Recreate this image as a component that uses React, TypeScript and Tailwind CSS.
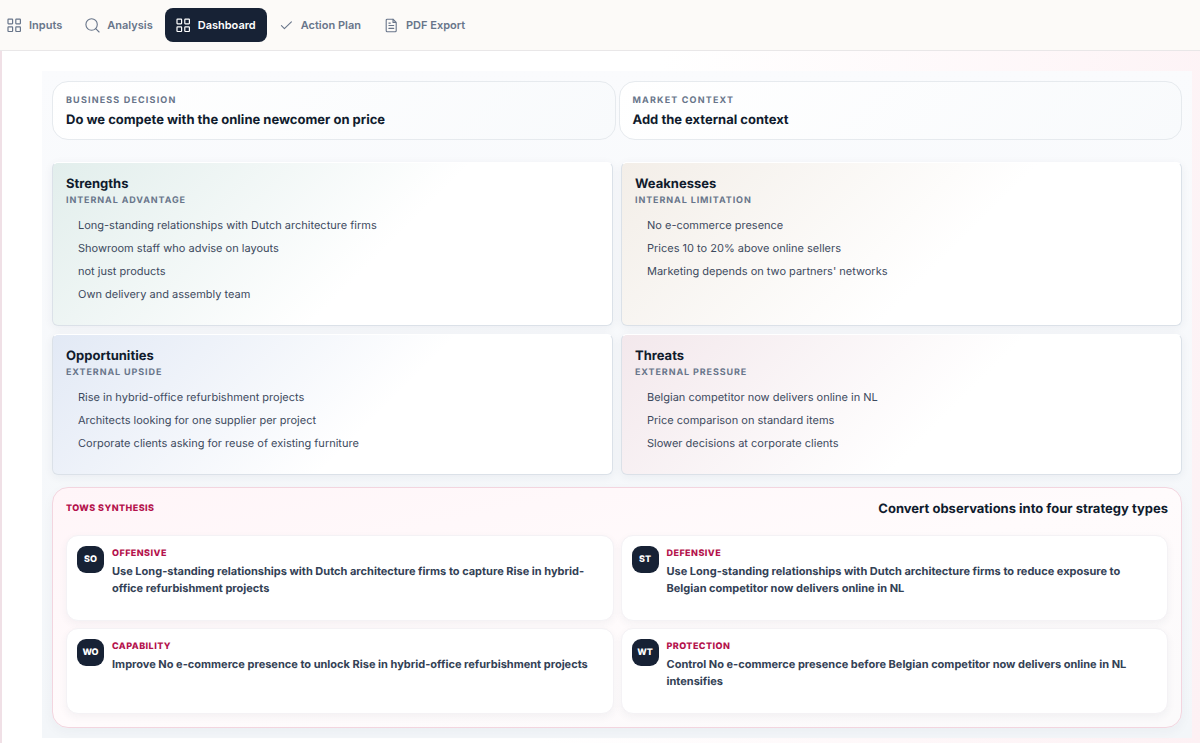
import type { ReactNode } from "react";

const sharedIcon = "size-[15px] shrink-0";

function GridIcon() {
  return (
    <svg className={sharedIcon} viewBox="0 0 15 15" fill="none" stroke="currentColor" strokeWidth="1.2" aria-hidden="true">
      <rect x="1" y="1.2" width="4.6" height="4.6" rx="0.5" />
      <rect x="8.8" y="1.2" width="4.6" height="4.6" rx="0.5" />
      <rect x="1" y="8.9" width="4.6" height="4.6" rx="0.5" />
      <rect x="8.8" y="8.9" width="4.6" height="4.6" rx="0.5" />
    </svg>
  );
}

function SearchIcon() {
  return (
    <svg className={sharedIcon} viewBox="0 0 15 15" fill="none" stroke="currentColor" strokeWidth="1.1" strokeLinecap="round" aria-hidden="true">
      <circle cx="6.6" cy="6.5" r="5.7" />
      <path d="M10.7 10.7 14.1 14" />
    </svg>
  );
}

function CheckIcon() {
  return (
    <svg className={sharedIcon} viewBox="0 0 15 15" fill="none" stroke="currentColor" strokeWidth="1.1" strokeLinecap="round" strokeLinejoin="round" aria-hidden="true">
      <path d="m2.4 7.6 3 3 7-6.8" />
    </svg>
  );
}

function FileIcon() {
  return (
    <svg className={sharedIcon} viewBox="0 0 15 15" fill="none" stroke="currentColor" strokeWidth="1.1" strokeLinecap="round" strokeLinejoin="round" aria-hidden="true">
      <path d="M9 1.2H3.2a1 1 0 0 0-1 1v10.6a1 1 0 0 0 1 1h8a1 1 0 0 0 1-1V4.4L9 1.2v3.2h3.2" />
      <path d="M4.9 7.5h4.8M4.9 10.4h4.8M4.9 5.1h1.4" />
    </svg>
  );
}

const tabs: { label: string; icon: ReactNode; active?: boolean }[] = [
  { label: "Inputs", icon: <GridIcon /> },
  { label: "Analysis", icon: <SearchIcon /> },
  { label: "Dashboard", icon: <GridIcon />, active: true },
  { label: "Action Plan", icon: <CheckIcon /> },
  { label: "PDF Export", icon: <FileIcon /> },
];

const context = [
  { label: "Business decision", value: "Do we compete with the online newcomer on price" },
  { label: "Market context", value: "Add the external context" },
];

const quadrants = [
  {
    title: "Strengths",
    note: "Internal advantage",
    tint: "bg-[linear-gradient(135deg,#e2eeec,#ffffff_58%)]",
    items: [
      "Long-standing relationships with Dutch architecture firms",
      "Showroom staff who advise on layouts",
      "not just products",
      "Own delivery and assembly team",
    ],
  },
  {
    title: "Weaknesses",
    note: "Internal limitation",
    tint: "bg-[linear-gradient(135deg,#f3eee8,#ffffff_58%)]",
    items: [
      "No e-commerce presence",
      "Prices 10 to 20% above online sellers",
      "Marketing depends on two partners' networks",
    ],
  },
  {
    title: "Opportunities",
    note: "External upside",
    tint: "bg-[linear-gradient(135deg,#e2e9f5,#ffffff_58%)]",
    items: [
      "Rise in hybrid-office refurbishment projects",
      "Architects looking for one supplier per project",
      "Corporate clients asking for reuse of existing furniture",
    ],
  },
  {
    title: "Threats",
    note: "External pressure",
    tint: "bg-[linear-gradient(135deg,#f3e8ec,#ffffff_58%)]",
    items: [
      "Belgian competitor now delivers online in NL",
      "Price comparison on standard items",
      "Slower decisions at corporate clients",
    ],
  },
];

const strategies = [
  { code: "SO", type: "Offensive", text: "Use Long-standing relationships with Dutch architecture firms to capture Rise in hybrid-office refurbishment projects" },
  { code: "ST", type: "Defensive", text: "Use Long-standing relationships with Dutch architecture firms to reduce exposure to Belgian competitor now delivers online in NL" },
  { code: "WO", type: "Capability", text: "Improve No e-commerce presence to unlock Rise in hybrid-office refurbishment projects" },
  { code: "WT", type: "Protection", text: "Control No e-commerce presence before Belgian competitor now delivers online in NL intensifies" },
];

export default function App() {
  return (
    <div className="flex min-h-screen flex-col bg-[#fcfaf8] font-['Inter',sans-serif] text-[#101b2d] [text-rendering:geometricPrecision]">
      <header className="overflow-hidden border-b border-[#e9e7e8] py-2">
        <nav className="-ml-1 flex gap-px" aria-label="Sections">
          {tabs.map((tab) => (
            <button
              key={tab.label}
              type="button"
              aria-current={tab.active ? "page" : undefined}
              className={`flex h-[34px] items-center gap-[7px] rounded-lg px-[11px] text-[11px] font-semibold ${
                tab.active ? "bg-[#172235] text-white" : "text-[#68758a]"
              }`}
            >
              {tab.icon}
              {tab.label}
            </button>
          ))}
        </nav>
      </header>

      <main className="grow border-l-2 border-[#f0e0e6] bg-[linear-gradient(100deg,#ffffff_50%,#fdf1f4)] pt-5 pr-2 pb-1 pl-10">
        <div className="bg-linear-to-b from-[#fafbfd] to-[#f3f6f9] p-[10px]">
          <section className="grid grid-cols-2 gap-[3px]">
            {context.map((entry) => (
              <div key={entry.label} className="rounded-2xl border border-[#e6eaee] bg-[linear-gradient(135deg,#ffffff,#f8fafc)] px-[13px] pt-3 pb-[10px]">
                <p className="text-[9px] leading-[13px] font-bold tracking-[0.13em] text-[#68758a] uppercase">{entry.label}</p>
                <p className="mt-1 text-[13px] leading-[18px] font-bold">{entry.value}</p>
              </div>
            ))}
          </section>

          <section className="mt-[22px] grid grid-cols-2 gap-2">
            {quadrants.map((q) => (
              <article
                key={q.title}
                className={`rounded-md border border-t-white border-[#dbe1e8] px-[13px] pt-3 pb-[19px] shadow-[0_2px_10px_rgba(30,50,80,0.06)] ${q.tint}`}
              >
                <h2 className="text-[13px] leading-[18px] font-bold">{q.title}</h2>
                <p className="text-[9px] leading-4 font-bold tracking-widest text-[#68758a] uppercase">{q.note}</p>
                <ul className="mt-[5px] pl-3 text-[11px] leading-[23px] text-[#3d4a5e]">
                  {q.items.map((item) => (
                    <li key={item}>{item}</li>
                  ))}
                </ul>
              </article>
            ))}
          </section>

          <section className="mt-3 rounded-2xl border border-[#f3d5df] bg-linear-to-br from-[#fff5f8] via-[#fffbfc] to-[#fbfafb] px-[13px] pt-3 pb-[13px] shadow-[0_4px_12px_rgba(30,50,80,0.04)]">
            <div className="flex items-center justify-between">
              <p className="text-[9px] font-extrabold tracking-wider text-[#b4124c] uppercase">TOWS synthesis</p>
              <h2 className="text-[13px] leading-[18px] font-bold">Convert observations into four strategy types</h2>
            </div>
            <div className="mt-[17px] grid grid-cols-2 gap-[7px]">
              {strategies.map((s) => (
                <article key={s.code} className="flex min-h-[86px] items-start gap-2 rounded-xl border border-[#f4f2f5] bg-white p-[10px] shadow-[0_3px_9px_rgba(30,50,80,0.05)]">
                  <span className="flex size-[27px] shrink-0 items-center justify-center rounded-[9px] bg-[#172235] text-[9px] font-extrabold text-white">{s.code}</span>
                  <div>
                    <h3 className="text-[9px] leading-[15px] font-extrabold tracking-wider text-[#b4124c] uppercase">{s.type}</h3>
                    <p className="mt-[2px] text-[11px] leading-[17px] font-bold text-[#334155]">{s.text}</p>
                  </div>
                </article>
              ))}
            </div>
          </section>
        </div>
      </main>
    </div>
  );
}
